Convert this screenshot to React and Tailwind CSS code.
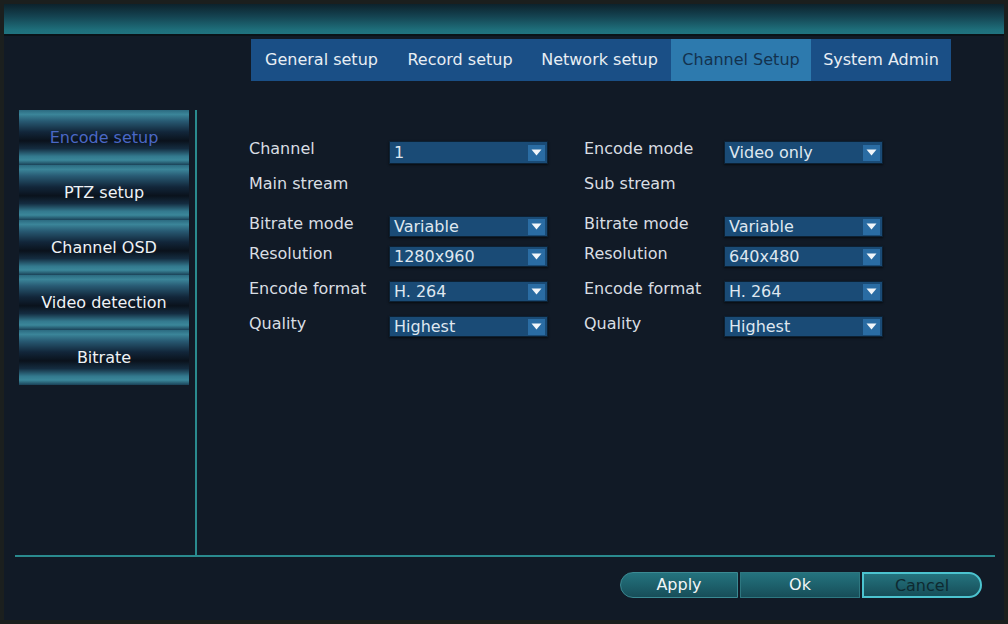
import React from "react";

const tabs = [
  { label: "General setup", w: "w-[141px]" },
  { label: "Record setup", w: "w-[136px]" },
  { label: "Network setup", w: "w-[143px]" },
  { label: "Channel Setup", w: "w-[140px]", active: true },
  { label: "System Admin", w: "w-[140px]" },
];

const sideItems = ["Encode setup", "PTZ setup", "Channel OSD", "Video detection", "Bitrate"];

const leftRows = [
  { label: "Channel", value: "1", h: "h-[35px]", tall: true },
  { label: "Main stream", h: "h-[40px]" },
  { label: "Bitrate mode", value: "Variable", h: "h-[30px]" },
  { label: "Resolution", value: "1280x960", h: "h-[35px]" },
  { label: "Encode format", value: "H. 264", h: "h-[35px]" },
  { label: "Quality", value: "Highest", h: "h-[35px]" },
];

const rightRows = [
  { label: "Encode mode", value: "Video only", h: "h-[35px]", tall: true },
  { label: "Sub stream", h: "h-[40px]" },
  { label: "Bitrate mode", value: "Variable", h: "h-[30px]" },
  { label: "Resolution", value: "640x480", h: "h-[35px]" },
  { label: "Encode format", value: "H. 264", h: "h-[35px]" },
  { label: "Quality", value: "Highest", h: "h-[35px]" },
];

const DropArrow = () => (
  <span className="flex h-[16px] w-[17px] items-center justify-center bg-[#2a6ca3]">
    <svg width="11" height="7" viewBox="0 0 11 7">
      <polygon points="0.5,0.5 10.5,0.5 5.5,6.5" fill="#f2f6fa" />
    </svg>
  </span>
);

const Select = ({ value, tall }) => (
  <div
    className={`flex w-[159px] items-center justify-between border border-[#0c2134] bg-[#1a4b76] pl-[4px] pr-[2px] text-[#dfe7ef] shadow-[0_1px_2px_rgba(0,0,0,0.6)] ${
      tall ? "h-[23px]" : "h-[21px]"
    }`}
  >
    <span className="pt-[1px] leading-5">{value}</span>
    <DropArrow />
  </div>
);

const FormColumn = ({ rows }) => (
  <div className="flex w-[335px] flex-col">
    {rows.map((row) => (
      <div key={row.label} className={`flex items-start ${row.h}`}>
        <div className="w-[140px] pt-[1px] leading-5 text-[#d9dee3]">{row.label}</div>
        {row.value ? (
          <div className="mt-[3px]">
            <Select value={row.value} tall={row.tall} />
          </div>
        ) : null}
      </div>
    ))}
  </div>
);

export default function App() {
  return (
    <div
      className="h-[624px] w-[1008px] bg-[#1b1f1e] p-[4px] text-[16px]"
      style={{ fontFamily: '"DejaVu Sans", Verdana, sans-serif' }}
    >
      <div className="flex h-full flex-col bg-[#111a26]">
        {/* title bar */}
        <div className="h-[32px] border-b-2 border-[#0a1218] bg-[linear-gradient(to_bottom,#0c222c_0%,#144250_40%,#1e6e7a_85%,#20737f_100%)]" />

        {/* tabs */}
        <div className="ml-[247px] mt-[3px] flex h-[42px]">
          {tabs.map((tab) => (
            <div
              key={tab.label}
              className={`flex items-center justify-center ${tab.w} ${
                tab.active ? "bg-[#2d7aae] text-[#13324f]" : "bg-[#1a4f86] text-[#e8eef4]"
              }`}
            >
              {tab.label}
            </div>
          ))}
        </div>

        {/* body */}
        <div className="mt-[29px] flex h-[445px] pl-[15px]">
          <div className="flex w-[170px] flex-col">
            {sideItems.map((item, i) => (
              <div
                key={item}
                className={`flex h-[55px] items-center justify-center bg-[linear-gradient(to_bottom,#2b6a80_0%,#3b8599_8%,#285a73_20%,#12263a_40%,#0a121c_56%,#142c40_70%,#33798e_84%,#3b879a_91%,#1a4157_100%)] ${
                  i === 0 ? "text-[#4a68c6]" : "text-[#eef2f6]"
                }`}
              >
                {item}
              </div>
            ))}
          </div>
          <div className="ml-[6px] h-full w-[2px] bg-[#2a8a8e]" />
          <div className="flex pl-[52px] pt-[28px]">
            <FormColumn rows={leftRows} />
            <FormColumn rows={rightRows} />
          </div>
        </div>

        {/* divider */}
        <div className="ml-[11px] h-[2px] w-[980px] bg-[#2a8a8e]" />

        {/* buttons */}
        <div className="mt-[15px] flex justify-end gap-[2px] pr-[22px]">
          <button className="h-[26px] w-[118px] rounded-l-full border border-[#3b8a93] bg-[linear-gradient(to_bottom,#24737e,#174e59)] text-[#f1f5f7]">
            Apply
          </button>
          <button className="h-[26px] w-[120px] border border-[#2e7780] bg-[linear-gradient(to_bottom,#24737e,#174e59)] text-[#f1f5f7]">
            Ok
          </button>
          <button className="h-[26px] w-[120px] rounded-r-full border-2 border-[#4cc3cf] bg-[linear-gradient(to_bottom,#24737e,#174e59)] text-[#0e2a31]">
            Cancel
          </button>
        </div>
      </div>
    </div>
  );
}
